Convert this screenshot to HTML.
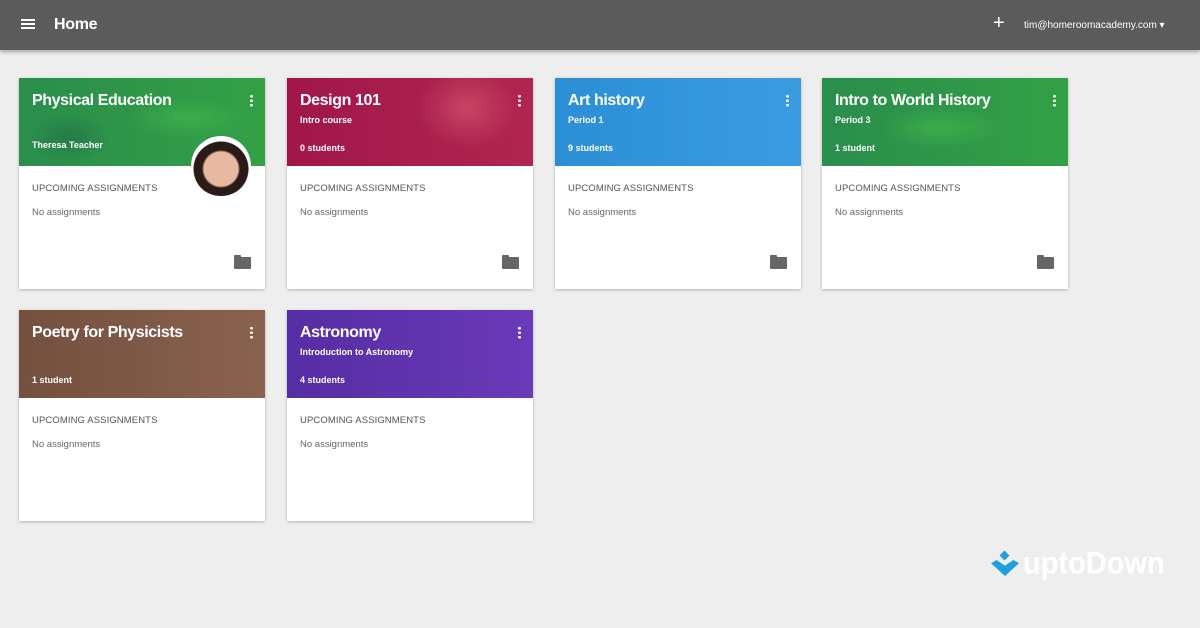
<!DOCTYPE html>
<html><head><style>
*{margin:0;padding:0;box-sizing:border-box}
body{width:1200px;height:628px;background:#eeeeee;font-family:"Liberation Sans",sans-serif;position:relative;overflow:hidden}
.top{position:absolute;left:0;top:0;width:1200px;height:50px;background:#5b5b5b;box-shadow:0 2px 4px rgba(0,0,0,.3);color:#fff}
.card{position:absolute;width:246px;height:211px;background:#fff;box-shadow:0 1px 3px rgba(0,0,0,.25)}
.hd{position:absolute;left:0;top:0;width:100%;height:88px;overflow:hidden;color:#fff}
.t{position:absolute;left:13px;top:14px;font-size:16px;font-weight:bold;letter-spacing:-.4px}
.s{position:absolute;left:13px;top:37px;font-size:9px;font-weight:bold}
.n{position:absolute;left:13px;top:65px;font-size:9px;font-weight:bold}
.dots{position:absolute;right:12px;top:16px;width:3px;height:13px;background:radial-gradient(circle,#fff 1.3px,transparent 1.5px) 0 0/3px 4.5px}
.up{position:absolute;left:13px;top:105px;font-size:9.5px;color:#555;letter-spacing:.1px}
.na{position:absolute;left:13px;top:129px;font-size:9.5px;color:#666}
.fold{position:absolute;left:215px;top:179px;width:17px;height:12px;background:#666;border-radius:1px}
.fold:before{content:"";position:absolute;left:0;top:-2px;width:7px;height:3px;background:#666;border-radius:1px 1px 0 0}
</style></head><body>
<div class="top">
<div style="position:absolute;left:21px;top:19px;width:14px;height:2px;background:#fff;box-shadow:0 4px 0 #fff,0 8px 0 #fff"></div>
<div style="position:absolute;left:54px;top:16px;font-size:16px;font-weight:bold;letter-spacing:-.3px">Home</div>
<div style="position:absolute;left:993px;top:12px;font-size:20px">+</div>
<div style="position:absolute;left:1024px;top:20px;font-size:10px">tim@homeroomacademy.com ▾</div>
</div>

<div class="card" style="left:19px;top:78px"><div class="hd" style="background:radial-gradient(ellipse 40px 25px at 50px 60px,#257a4a,transparent),radial-gradient(ellipse 60px 20px at 170px 40px,#3cae4c,transparent),linear-gradient(90deg,#2a8e4c,#33a046)">
<div class="t">Physical Education</div><div class="n" style="top:62px">Theresa Teacher</div><div class="dots"></div></div>
<div style="position:absolute;left:172px;top:58px;width:60px;height:60px;border-radius:50%;background:radial-gradient(circle at 50% 55%,#e9b8a0 17px,#2a1a18 19px,#2a1a18 27px,#fff 28px)"></div>
<div class="up">UPCOMING ASSIGNMENTS</div><div class="na">No assignments</div><div class="fold"></div></div>

<div class="card" style="left:287px;top:78px"><div class="hd" style="background:radial-gradient(ellipse 50px 40px at 180px 30px,#c84464,transparent),linear-gradient(90deg,#a0164a,#b02650)">
<div class="t">Design 101</div><div class="s">Intro course</div><div class="n">0 students</div><div class="dots"></div></div>
<div class="up">UPCOMING ASSIGNMENTS</div><div class="na">No assignments</div><div class="fold"></div></div>

<div class="card" style="left:555px;top:78px"><div class="hd" style="background:linear-gradient(90deg,#2c8fd6,#3a9be0)">
<div class="t">Art history</div><div class="s">Period 1</div><div class="n">9 students</div><div class="dots"></div></div>
<div class="up">UPCOMING ASSIGNMENTS</div><div class="na">No assignments</div><div class="fold"></div></div>

<div class="card" style="left:822px;top:78px"><div class="hd" style="background:radial-gradient(ellipse 60px 20px at 120px 50px,#3cae4c,transparent),linear-gradient(90deg,#2a8e4c,#33a046)">
<div class="t">Intro to World History</div><div class="s">Period 3</div><div class="n">1 student</div><div class="dots"></div></div>
<div class="up">UPCOMING ASSIGNMENTS</div><div class="na">No assignments</div><div class="fold"></div></div>

<div class="card" style="left:19px;top:310px"><div class="hd" style="background:linear-gradient(90deg,#74503f,#8a624f)">
<div class="t">Poetry for Physicists</div><div class="n">1 student</div><div class="dots"></div></div>
<div class="up">UPCOMING ASSIGNMENTS</div><div class="na">No assignments</div></div>

<div class="card" style="left:287px;top:310px"><div class="hd" style="background:linear-gradient(90deg,#552da4,#6a3ab8)">
<div class="t">Astronomy</div><div class="s">Introduction to Astronomy</div><div class="n">4 students</div><div class="dots"></div></div>
<div class="up">UPCOMING ASSIGNMENTS</div><div class="na">No assignments</div></div>

<div style="position:absolute;left:991px;top:552px;width:28px;height:26px">
<div style="position:absolute;left:10px;top:0;width:7px;height:7px;background:#1ea0d8;transform:rotate(45deg)"></div>
<div style="position:absolute;left:0;top:8px;width:28px;height:16px;background:#1ea0d8;clip-path:polygon(0 20%,20% 0,50% 35%,80% 0,100% 20%,50% 100%)"></div></div>
<div style="position:absolute;left:1023px;top:546px;font-size:29px;font-weight:bold;color:#fff;letter-spacing:0px;transform:scaleY(1.1);transform-origin:left top">uptoDown</div>
</body></html>
